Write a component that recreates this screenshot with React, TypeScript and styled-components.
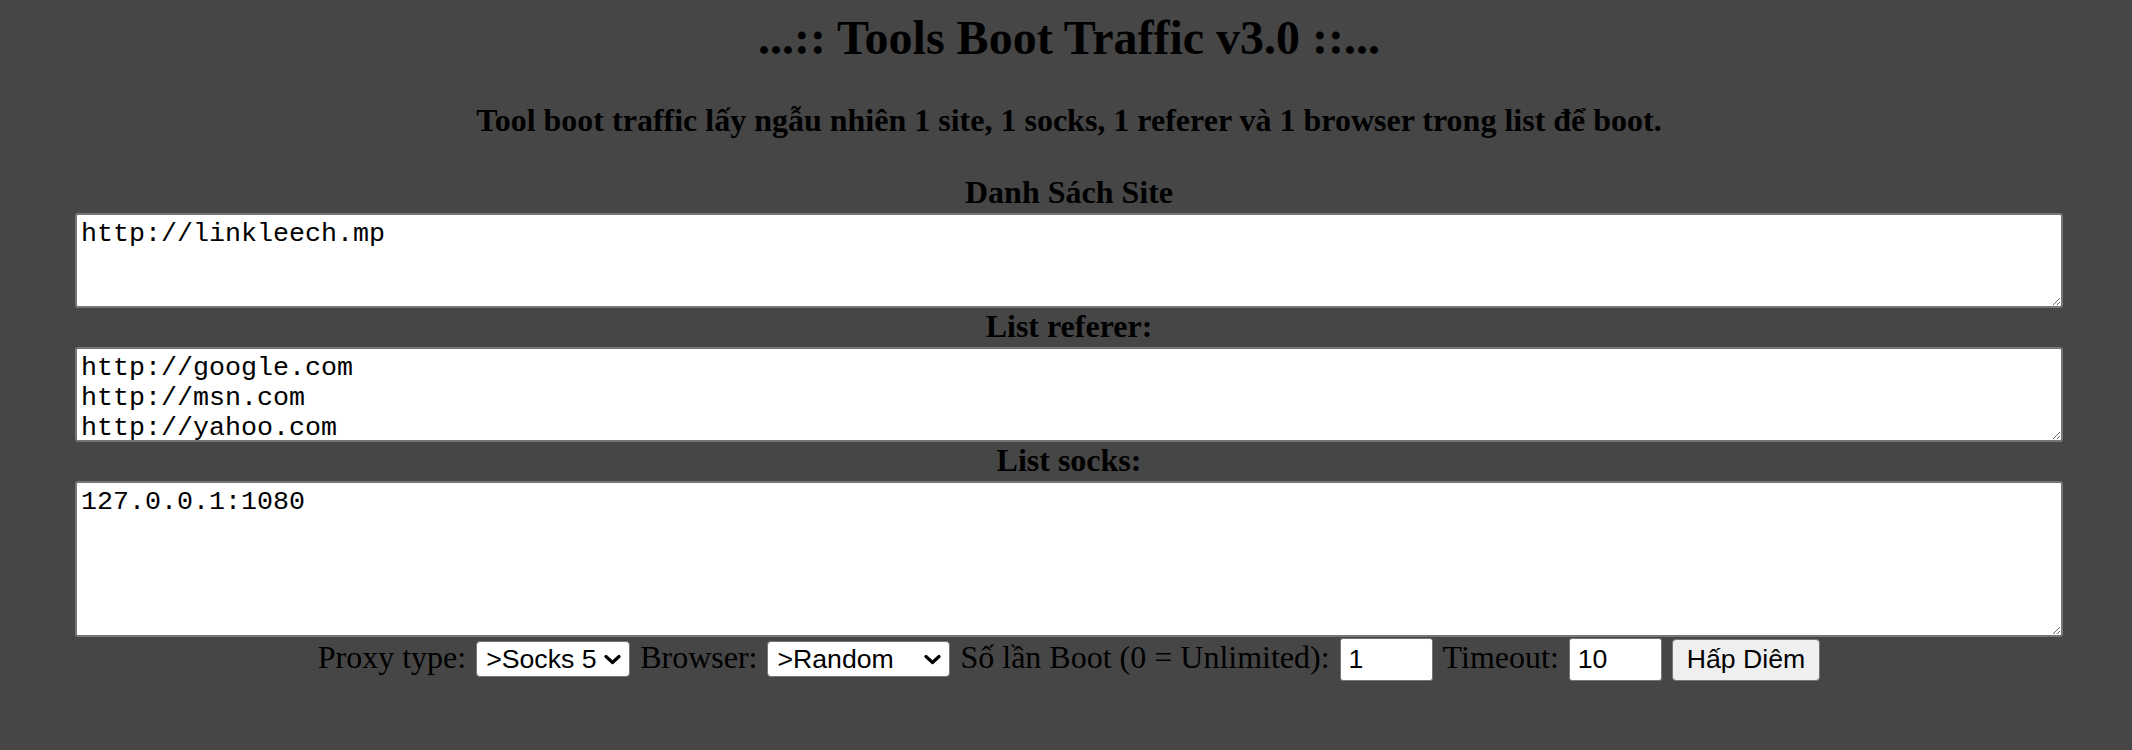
import React from "react";
import styled, { createGlobalStyle } from "styled-components";

const Global = createGlobalStyle`
  html, body {
    margin: 0;
    padding: 0;
    background: #464646;
  }
  body {
    font-family: "Liberation Serif", "Times New Roman", serif;
    color: #000;
  }
`;

const Page = styled.div`
  padding: 10px 0 20px 6px;
  text-align: center;
  font-family: "Liberation Serif", "Times New Roman", serif;
`;

const Title = styled.h1`
  margin: 0;
  font-size: 48px;
  line-height: 55px;
  font-weight: bold;
`;

const Subtitle = styled.p`
  margin: 37px 0 35px;
  font-size: 32px;
  line-height: 37px;
  font-weight: bold;
`;

const Section = styled.div`
  display: flex;
  flex-direction: column;
  align-items: center;
`;

const Label = styled.label`
  display: block;
  font-size: 32px;
  line-height: 37px;
  font-weight: bold;
  margin-bottom: 2px;
`;

const Area = styled.textarea<{ $h: number }>`
  display: block;
  box-sizing: border-box;
  width: 1988px;
  height: ${(p) => p.$h}px;
  margin: 0;
  padding: 4px 4px;
  border: 2px solid #767676;
  border-radius: 3px;
  background: #fff;
  color: #000;
  font-family: "Liberation Mono", "Courier New", monospace;
  font-size: 26.67px;
  line-height: normal;
  overflow: hidden;
  resize: both;
  outline: none;
`;

const Row = styled.div`
  display: flex;
  justify-content: center;
  align-items: baseline;
  gap: 10px;
  margin-top: 1px;
  font-size: 32px;
  line-height: 37px;
`;

const Text = styled.span`
  font-family: "Liberation Serif", "Times New Roman", serif;
  font-size: 32px;
  white-space: nowrap;
`;

const SelectBox = styled.span`
  position: relative;
  display: inline-flex;
`;

const Select = styled.select<{ $w: number }>`
  appearance: none;
  -webkit-appearance: none;
  box-sizing: border-box;
  width: ${(p) => p.$w}px;
  height: 36px;
  margin: 0;
  padding: 0 0 0 9px;
  border: 1px solid #767676;
  border-radius: 4px;
  background: #fff;
  color: #000;
  font-family: "Liberation Sans", Arial, sans-serif;
  font-size: 26.67px;
  outline: none;
`;

const Chevron = styled.svg`
  position: absolute;
  right: 9px;
  top: 50%;
  margin-top: -5px;
  width: 17px;
  height: 11px;
  pointer-events: none;
`;

const Input = styled.input`
  box-sizing: border-box;
  width: 93px;
  height: 43px;
  margin: 0;
  padding: 2px 8px;
  border: 1px solid #767676;
  border-radius: 3px;
  background: #fff;
  color: #000;
  font-family: "Liberation Sans", Arial, sans-serif;
  font-size: 26.67px;
  outline: none;
`;

const Button = styled.button`
  box-sizing: border-box;
  height: 42px;
  margin: 0;
  padding: 0 14px;
  border: 1px solid #767676;
  border-radius: 4px;
  background: #efefef;
  color: #000;
  font-family: "Liberation Sans", Arial, sans-serif;
  font-size: 26.67px;
  white-space: nowrap;
  cursor: pointer;
`;

const Drop = ({ w, options, value }: { w: number; options: string[]; value: string }) => (
  <SelectBox>
    <Select $w={w} defaultValue={value}>
      {options.map((o) => (
        <option key={o} value={o}>
          {o}
        </option>
      ))}
    </Select>
    <Chevron viewBox="0 0 17 11">
      <path d="M2 2.5 L8.5 8.5 L15 2.5" fill="none" stroke="#000" strokeWidth="3.2" strokeLinecap="round" strokeLinejoin="round" />
    </Chevron>
  </SelectBox>
);

export default function App() {
  return (
    <>
      <Global />
      <Page>
        <Title>...:: Tools Boot Traffic v3.0 ::...</Title>
        <Subtitle>
          Tool boot traffic lấy ngẫu nhiên 1 site, 1 socks, 1 referer và 1 browser trong list để boot.
        </Subtitle>
        <Section>
          <Label>Danh Sách Site</Label>
          <Area $h={95} defaultValue={"http://linkleech.mp"} />
          <Label>List referer:</Label>
          <Area $h={95} defaultValue={"http://google.com\nhttp://msn.com\nhttp://yahoo.com\nhttp://bing.com"} />
          <Label>List socks:</Label>
          <Area $h={156} defaultValue={"127.0.0.1:1080"} />
        </Section>
        <Row>
          <Text>Proxy type:</Text>
          <Drop w={154} options={[">Socks 5", ">Socks 4", ">HTTP"]} value=">Socks 5" />
          <Text>Browser:</Text>
          <Drop w={183} options={[">Random", ">Firefox", ">Chrome", ">Internet Explorer"]} value=">Random" />
          <Text>Số lần Boot (0 = Unlimited):</Text>
          <Input defaultValue="1" />
          <Text>Timeout:</Text>
          <Input defaultValue="10" />
          <Button>Hấp Diêm</Button>
        </Row>
      </Page>
    </>
  );
}
